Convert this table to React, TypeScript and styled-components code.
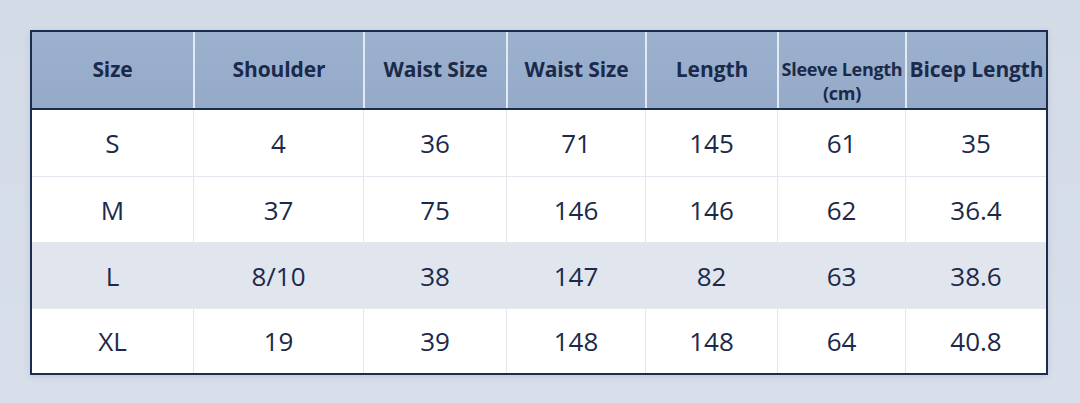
import React from "react";
import styled, { createGlobalStyle } from "styled-components";

const Global = createGlobalStyle`
  html, body { margin: 0; padding: 0; }
  body {
    background: linear-gradient(180deg, #d3dbe7 0%, #d8dfea 100%);
    font-family: "Open Sans", "Noto Sans", sans-serif;
    color: #1b2a4a;
  }
`;

const Page = styled.div`
  width: 1080px;
  height: 403px;
  box-sizing: border-box;
  padding: 30px 0 0 30px;
`;

const Table = styled.div`
  width: 1018px;
  box-sizing: border-box;
  border: 2px solid #1b2d4f;
  background: #ffffff;
  box-shadow: 0 2px 6px rgba(40, 60, 100, 0.12);
`;

const COLS = "161px 170px 143px 139px 132px 128px 141px";

const HeaderRow = styled.div`
  display: grid;
  grid-template-columns: ${COLS};
  height: 76px;
  background: linear-gradient(180deg, #9cb1ce 0%, #94aac8 100%);
  border-bottom: 2px solid #1b2d4f;
`;

const HeaderCell = styled.div<{ $first?: boolean; $small?: boolean }>`
  display: flex;
  flex-direction: column;
  align-items: center;
  padding-top: ${(p) => (p.$small ? "25px" : "23px")};
  box-sizing: border-box;
  border-left: ${(p) => (p.$first ? "none" : "2px solid #e3e9f2")};
  font-weight: 700;
  font-size: ${(p) => (p.$small ? "18px" : "21px")};
  line-height: ${(p) => (p.$small ? "24px" : "28px")};
  letter-spacing: ${(p) => (p.$small ? "-0.3px" : "-0.1px")};
  color: #1b2a4a;
  white-space: nowrap;
  text-align: center;
`;

const BodyRow = styled.div<{ $alt?: boolean; $first?: boolean; $last?: boolean }>`
  display: grid;
  grid-template-columns: ${COLS};
  height: ${(p) => (p.$last ? "65px" : "66px")};
  background: ${(p) => (p.$alt ? "#e0e5ee" : "#ffffff")};
  border-top: ${(p) => (p.$first ? "none" : "1px solid #e4e8ee")};
  box-sizing: border-box;
`;

const Cell = styled.div<{ $first?: boolean }>`
  display: flex;
  align-items: center;
  justify-content: center;
  border-left: ${(p) => (p.$first ? "none" : "1px solid #e2e6ed")};
  font-size: 26px;
  font-weight: 400;
  letter-spacing: 0;
  color: #1b2a4a;
`;

const headers = ["Size", "Shoulder", "Waist Size", "Waist Size", "Length", "Sleeve Length", "Bicep Length"];

const rows = [
  ["S", "4", "36", "71", "145", "61", "35"],
  ["M", "37", "75", "146", "146", "62", "36.4"],
  ["L", "8/10", "38", "147", "82", "63", "38.6"],
  ["XL", "19", "39", "148", "148", "64", "40.8"],
];

export default function App() {
  return (
    <>
      <Global />
      <Page>
        <Table>
          <HeaderRow>
            {headers.map((h, i) =>
              h === "Sleeve Length" ? (
                <HeaderCell key={i} $small>
                  <span>Sleeve Length</span>
                  <span>(cm)</span>
                </HeaderCell>
              ) : (
                <HeaderCell key={i} $first={i === 0}>
                  {h}
                </HeaderCell>
              )
            )}
          </HeaderRow>
          {rows.map((r, ri) => (
            <BodyRow key={ri} $alt={ri === 2} $first={ri === 0} $last={ri === rows.length - 1}>
              {r.map((c, ci) => (
                <Cell key={ci} $first={ci === 0}>
                  {c}
                </Cell>
              ))}
            </BodyRow>
          ))}
        </Table>
      </Page>
    </>
  );
}
